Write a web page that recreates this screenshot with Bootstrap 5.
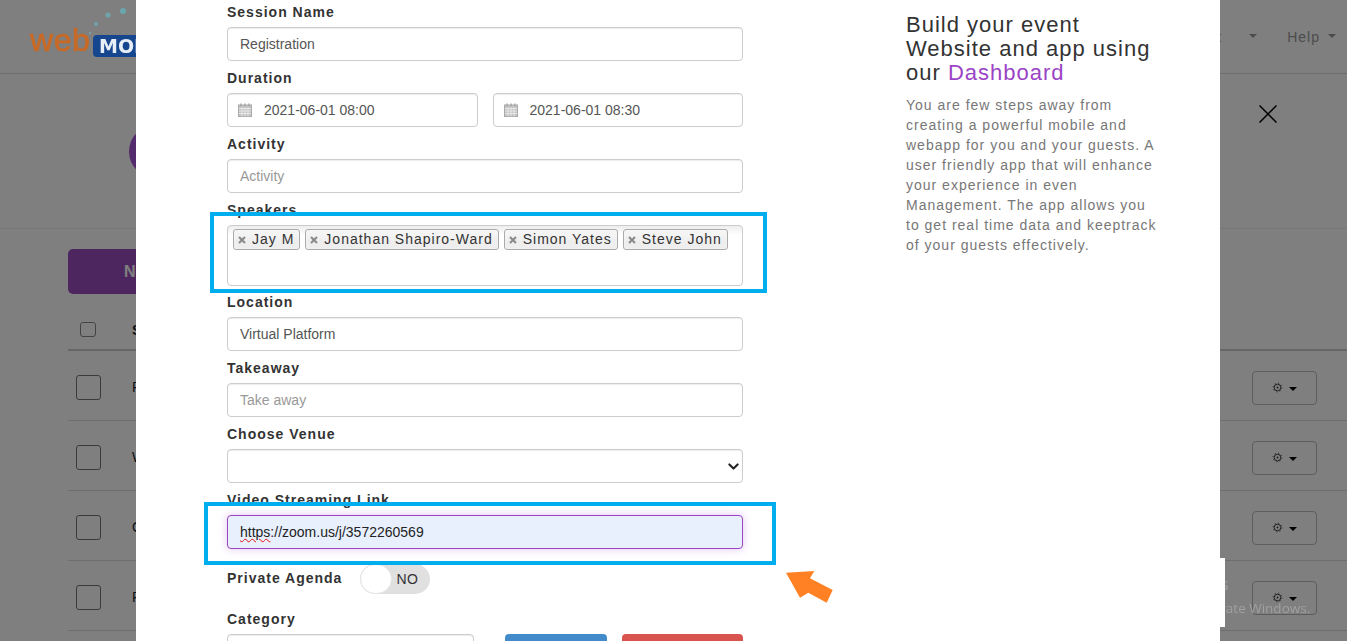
<!DOCTYPE html>
<html lang="en">
<head>
<meta charset="utf-8">
<title>Session form</title>
<link href="https://cdn.jsdelivr.net/npm/bootstrap@5.3.0/dist/css/bootstrap.min.css" rel="stylesheet">
<style>
html,body{height:641px;overflow:hidden}
body{font-family:"Liberation Sans",Arial,sans-serif;font-size:14px;color:#333;background:#fff;position:relative}
.top-bar{height:74px;border-bottom:1px solid #ddd;padding-left:30px;padding-right:11px}
.top-nav{margin-top:2px}
.logo-wrap{position:relative;z-index:1055;width:130px;height:60px;margin-top:6px}
.logo-dots{position:absolute;left:0;top:0}
.logo-web{position:absolute;left:0;top:14px;font-size:32px;line-height:40px;color:#c86a26;letter-spacing:.6px;-webkit-text-stroke:.7px #c86a26}
.logo-box{position:absolute;left:63px;top:29px;width:90px;height:22px;background:#15468e;border-radius:4px;color:#e8eef6;font-family:"DejaVu Sans",sans-serif;font-weight:700;font-size:19px;line-height:22px;padding-left:6px}
.nav-txt{color:#999;letter-spacing:1px}
.nav-txt.dropdown-toggle::after{color:#999;margin-left:8px}
.acct{margin-right:30px}
.acct.dropdown-toggle::after{margin-left:27px}
.hero{height:155px;border-bottom:1px solid #eee;padding-left:129px}
.avatar{width:53px;height:53px;border-radius:50%;background:#a655d6}
.new-btn{display:block;margin:20px 0 0 68px;width:200px;height:45px;background:#9b4cc1;border-radius:5px;color:#fff;font-size:16px;font-weight:700;line-height:45px;padding-left:56px}
.sess-table{margin-left:68px;width:1279px;margin-bottom:0}
.sess-table th{height:56px;padding:0;border-bottom:2px solid #ccc;vertical-align:middle;padding-top:17px;font-weight:700}
.sess-table td{height:70px;padding:5px 0 0;border-bottom:1px solid #ddd;vertical-align:middle}
.col-check{width:64px}
.col-act{width:95px}
.box-head{display:block;width:16px;height:15px;margin-left:12px;margin-bottom:2px;border:1px solid #888;border-radius:3px;background:#fff}
.box-row{display:block;width:25px;height:25px;margin-left:8px;border:1px solid #777;border-radius:3px;background:#fff}
.act-btn{width:65px;height:34px;padding:0;border:1px solid #bbb;border-radius:4px;color:#111;background:#fff;font-size:14px;line-height:32px;display:flex;align-items:center;justify-content:center;gap:1px}
.act-btn.dropdown-toggle::after{margin-left:5px;margin-top:2px;color:#000}
.win-mark{position:absolute;left:1089px;top:572px;z-index:1052;color:#a0a0a0;font-family:"Open Sans",sans-serif;white-space:nowrap}
.win-a{font-size:17px;line-height:24px}
.win-b{font-size:13.5px;line-height:20px;margin-top:2px}
.sheet{position:absolute;left:136px;top:0;width:1084px;height:641px;background:#fff;z-index:1060;overflow:hidden;padding:2px 0 0 91px}
.form-col{width:516px;flex:none}
.side-col{margin-left:163px;width:258px;padding-top:11px;letter-spacing:1px}
.side-title{font-size:22px;line-height:24px;font-weight:400;color:#333;margin-bottom:10px}
.side-title span{color:#9b44c6}
.side-text{color:#777;line-height:20px;font-size:14px;margin:0}
.fld{margin-bottom:7px}
.fld-lab{display:block;font-weight:700;letter-spacing:1px;line-height:20px;margin-bottom:5px;color:#333}
.fld-in{height:34px;padding:6px 12px;font-size:14px;line-height:20px;border:1px solid #ccc;border-radius:4px;color:#555;box-shadow:inset 0 1px 1px rgba(0,0,0,.075)}
.fld-in::placeholder{color:#999;opacity:1}
.date-row{gap:15px}
.date-in{gap:12px;padding-left:10px}
.tag-box{height:61px;border:1px solid #ccc;border-radius:4px;padding:3px 5px;margin-bottom:-1px;background:linear-gradient(#eee 1%,#fff 15%);gap:5px}
.tag-chip{height:21px;border:1px solid #aaa;border-radius:3px;padding:0 5px 0 4px;background:linear-gradient(#f4f4f4 20%,#eee 60%);letter-spacing:1px;line-height:19px;color:#333;box-shadow:inset 0 0 2px #fff;gap:6px}
.venue-sel{background-image:url("data:image/svg+xml,%3csvg xmlns='http://www.w3.org/2000/svg' viewBox='0 0 16 16'%3e%3cpath fill='none' stroke='%23222' stroke-linecap='round' stroke-linejoin='round' stroke-width='3' d='m2 5 6 6 6-6'/%3e%3c/svg%3e");background-position:right 3px center;background-size:11px 11px}
.stream-in{background:#e8f0fe;border-color:#9b44c6;box-shadow:0 0 8px rgba(155,68,198,.3);color:#222}
.stream-in span{text-decoration:underline wavy #e01010 1px}
.toggle-row{margin-top:15px;margin-bottom:15px;height:30px;gap:18px}
.toggle-row .fld-lab{margin:0 0 2px}
.toggle-track{width:70px;height:30px;border-radius:15px;background:#e0e0e0;gap:4px;color:#333;letter-spacing:.5px}
.toggle-knob{width:32px;height:30px;border-radius:15px;background:#fff;border:1px solid #e4e4e4}
.cat-in{width:247px}
.save-btn{width:102px;height:34px;margin-left:31px;background:#428bca;border:0;border-radius:4px;color:#fff}
.stop-btn{width:121px;height:34px;margin-left:15px;background:#d9534f;border:0;border-radius:4px;color:#fff}
.mark-box{position:absolute;border:4px solid #00aeef;z-index:1062;pointer-events:none}
.mark-a{left:210px;top:212px;width:557px;height:81px}
.mark-b{left:204px;top:502px;width:572px;height:63px}
.mark-arrow{position:absolute;left:780px;top:565px;z-index:1062}
.white-patch{position:absolute;left:1220px;top:558px;width:5px;height:69px;background:#fff;z-index:1061}
.close-x{position:absolute;left:1259px;top:105px;z-index:1061}
</style>
</head>
<body>
<svg width="0" height="0" class="position-absolute" aria-hidden="true"><defs>
  <symbol id="gear" viewBox="0 0 12 12"><circle cx="6" cy="6" r="3.6" fill="none" stroke="#333" stroke-width="1"/><circle cx="6" cy="6" r="4.8" fill="none" stroke="#333" stroke-width="1" stroke-dasharray="1.2 2.57"/><circle cx="6" cy="6" r="1" fill="#333"/></symbol>
  <symbol id="cal" viewBox="0 0 14 14"><rect x="0.5" y="2" width="13" height="11.5" fill="#c4c4c4" stroke="#aaa"/><path d="M3 .5v3M7 .5v3M11 .5v3" stroke="#aaa" stroke-width="1.6"/><path d="M1 5.5h12M1 8h12M1 10.5h12M4 4.5v9M7 4.5v9M10 4.5v9" stroke="#eee" stroke-width=".8"/></symbol>
  <symbol id="cross" viewBox="0 0 8 8"><path d="M1 1l6 6M7 1l-6 6" stroke="#888" stroke-width="2"/></symbol>
</defs></svg>
<header class="top-bar d-flex align-items-center justify-content-between">
  <div class="logo-wrap align-self-start">
    <svg class="logo-dots" width="130" height="40" viewBox="0 0 130 40" aria-hidden="true"><circle cx="93" cy="5" r="3" fill="#6aa6ad"/><circle cx="78" cy="9" r="2.6" fill="#6fa3a9"/><circle cx="66" cy="18" r="2" fill="#6fa3a9"/><circle cx="60" cy="27" r="1.2" fill="#7f9ea3"/></svg>
    <span class="logo-web">web</span>
    <span class="logo-box">MOBI</span>
  </div>
  <nav class="top-nav d-flex align-items-center">
    <span class="nav-txt dropdown-toggle acct">Account</span>
    <span class="nav-txt dropdown-toggle">Help</span>
  </nav>
</header>
<section class="hero d-flex align-items-center"><div class="avatar"></div></section>
<a class="new-btn text-decoration-none">New Session</a>
<table class="table sess-table">
  <thead><tr><th class="col-check"><span class="box-head"></span></th><th>Session</th><th class="col-act"></th></tr></thead>
  <tbody>
    <tr><td><span class="box-row"></span></td><td>Registration</td><td><button class="btn act-btn dropdown-toggle"><svg width="11" height="11" aria-hidden="true"><use href="#gear"/></svg></button></td></tr>
    <tr><td><span class="box-row"></span></td><td>Welcome</td><td><button class="btn act-btn dropdown-toggle"><svg width="11" height="11" aria-hidden="true"><use href="#gear"/></svg></button></td></tr>
    <tr><td><span class="box-row"></span></td><td>Opening</td><td><button class="btn act-btn dropdown-toggle"><svg width="11" height="11" aria-hidden="true"><use href="#gear"/></svg></button></td></tr>
    <tr><td><span class="box-row"></span></td><td>Registration</td><td><button class="btn act-btn dropdown-toggle"><svg width="11" height="11" aria-hidden="true"><use href="#gear"/></svg></button></td></tr>
  </tbody>
</table>
<div class="win-mark"><div class="win-a">Activate Windows</div><div class="win-b">Go to Settings to activate Windows.</div></div>
<div class="modal-backdrop fade show"></div>

<div class="sheet d-flex">
  <form class="form-col">
    <div class="fld"><label class="fld-lab">Session Name</label><input class="form-control fld-in" value="Registration"></div>
    <div class="fld"><span class="fld-lab">Duration</span>
      <div class="d-flex date-row">
        <div class="form-control fld-in date-in d-flex align-items-center"><svg width="14" height="14" aria-hidden="true"><use href="#cal"/></svg><span>2021-06-01 08:00</span></div>
        <div class="form-control fld-in date-in d-flex align-items-center"><svg width="14" height="14" aria-hidden="true"><use href="#cal"/></svg><span>2021-06-01 08:30</span></div>
      </div>
    </div>
    <div class="fld"><label class="fld-lab">Activity</label><input class="form-control fld-in" placeholder="Activity"></div>
    <div class="fld"><span class="fld-lab">Speakers</span>
      <div class="tag-box d-flex align-items-start">
        <span class="tag-chip d-inline-flex align-items-center"><svg width="8" height="8" aria-hidden="true"><use href="#cross"/></svg>Jay M</span>
        <span class="tag-chip d-inline-flex align-items-center"><svg width="8" height="8" aria-hidden="true"><use href="#cross"/></svg>Jonathan Shapiro-Ward</span>
        <span class="tag-chip d-inline-flex align-items-center"><svg width="8" height="8" aria-hidden="true"><use href="#cross"/></svg>Simon Yates</span>
        <span class="tag-chip d-inline-flex align-items-center"><svg width="8" height="8" aria-hidden="true"><use href="#cross"/></svg>Steve John</span>
      </div>
    </div>
    <div class="fld"><label class="fld-lab">Location</label><input class="form-control fld-in" value="Virtual Platform"></div>
    <div class="fld"><label class="fld-lab">Takeaway</label><input class="form-control fld-in" placeholder="Take away"></div>
    <div class="fld"><label class="fld-lab">Choose Venue</label><select class="form-select fld-in venue-sel"><option></option></select></div>
    <div class="fld"><label class="fld-lab">Video Streaming Link</label><div class="form-control fld-in stream-in"><span>https</span>://zoom.us/j/3572260569</div></div>
    <div class="toggle-row d-flex align-items-center"><span class="fld-lab">Private Agenda</span><div class="toggle-track d-flex align-items-center"><span class="toggle-knob"></span><span>NO</span></div></div>
    <div class="fld"><label class="fld-lab">Category</label>
      <div class="d-flex"><input class="form-control fld-in cat-in"><button type="button" class="save-btn" aria-label="Save"></button><button type="button" class="stop-btn" aria-label="Cancel"></button></div>
    </div>
  </form>
  <aside class="side-col">
    <h3 class="side-title">Build your event Website and app using our <span>Dashboard</span></h3>
    <p class="side-text">You are few steps away from creating a powerful mobile and webapp for you and your guests. A user friendly app that will enhance your experience in even Management. The app allows you to get real time data and keeptrack of your guests effectively.</p>
  </aside>
</div>

<div class="white-patch"></div>
<svg class="close-x" width="18" height="18" viewBox="0 0 18 18" aria-hidden="true"><path d="M.5.5l17 17M17.5.5l-17 17" stroke="#000" stroke-width="1.5"/></svg>
<div class="mark-box mark-a"></div>
<div class="mark-box mark-b"></div>
<svg class="mark-arrow" width="60" height="45" viewBox="780 565 60 45" aria-hidden="true"><polygon points="786,572.7 814.3,571 810,578.3 832.7,590 826.7,602.7 808.3,592.7 800,597.7" fill="#ff8124"/></svg>
<script src="https://cdn.jsdelivr.net/npm/bootstrap@5.3.0/dist/js/bootstrap.bundle.min.js"></script>
</body>
</html>
